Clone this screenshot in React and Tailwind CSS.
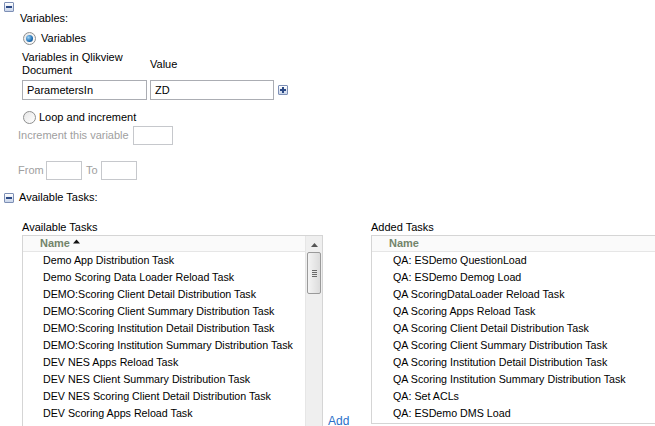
import { useState } from 'react'

const available = [
  'Demo App Distribution Task',
  'Demo Scoring Data Loader Reload Task',
  'DEMO:Scoring Client Detail Distribution Task',
  'DEMO:Scoring Client Summary Distribution Task',
  'DEMO:Scoring Institution Detail Distribution Task',
  'DEMO:Scoring Institution Summary Distribution Task',
  'DEV NES Apps Reload Task',
  'DEV NES Client Summary Distribution Task',
  'DEV NES Scoring Client Detail Distribution Task',
  'DEV Scoring Apps Reload Task',
  'DEV Scoring Client Summary Distribution Task',
]

const added = [
  'QA: ESDemo QuestionLoad',
  'QA: ESDemo Demog Load',
  'QA ScoringDataLoader Reload Task',
  'QA Scoring Apps Reload Task',
  'QA Scoring Client Detail Distribution Task',
  'QA Scoring Client Summary Distribution Task',
  'QA Scoring Institution Detail Distribution Task',
  'QA Scoring Institution Summary Distribution Task',
  'QA: Set ACLs',
  'QA: ESDemo DMS Load',
]

function ToggleBox({ plus = false }) {
  return (
    <div className="relative h-[10px] w-[10px] rounded-[1px] border border-[#7d8fb5] bg-gradient-to-b from-white to-[#c9d5ea]">
      <div className="absolute left-[1px] top-[3px] h-[2px] w-[6px] bg-[#2c4a86]" />
      {plus && <div className="absolute left-[3px] top-[1px] h-[6px] w-[2px] bg-[#2c4a86]" />}
    </div>
  )
}

function Radio({ checked }) {
  return (
    <div className="flex h-[13px] w-[13px] items-center justify-center rounded-full border border-[#8e8f8f] bg-gradient-to-br from-[#e6e6e6] to-white">
      {checked && (
        <div className="h-[7px] w-[7px] rounded-full bg-[radial-gradient(circle_at_35%_35%,#9fd3f5,#1f6fb4_60%,#0d3f78)]" />
      )}
    </div>
  )
}

function TextBox({ value, className }) {
  return (
    <div className={`flex items-center border border-[#abadb3] bg-white px-[4px] text-[#000] ${className}`}>
      {value}
    </div>
  )
}

export default function App() {
  const [mode] = useState('variables')

  return (
    <div className="relative h-[426px] w-[655px] overflow-hidden bg-white font-['Liberation_Sans',Arial,sans-serif] text-[11px] leading-[13px] text-[#000]">
      <div className="pl-[4px] pt-[2px]">
        <ToggleBox />
      </div>

      <div className="pl-[20px]">
        <div className="h-[14px]">Variables:</div>

        <div className="mt-[6px] flex items-center gap-[5px] pl-[3px]">
          <Radio checked={mode === 'variables'} />
          <span>Variables</span>
        </div>

        <div className="mt-[6px] flex pl-[2px]">
          <div className="w-[128px] leading-[13px]">
            Variables in Qlikview
            <br />
            Document
          </div>
          <div className="pt-[7px]">Value</div>
        </div>

        <div className="mt-[3px] flex items-center pl-[2px]">
          <TextBox value="ParametersIn" className="h-[20px] w-[125px]" />
          <TextBox value="ZD" className="ml-[3px] h-[20px] w-[124px]" />
          <div className="ml-[4px]">
            <ToggleBox plus />
          </div>
        </div>

        <div className="mt-[11px] flex items-center gap-[3px] pl-[3px]">
          <Radio checked={false} />
          <span>Loop and increment</span>
        </div>

        <div className="-ml-[2px] mt-[2px] flex items-center text-[#a0a0a0]">
          <span className="w-[115px]">Increment this variable</span>
          <div className="h-[19px] w-[40px] border border-[#c6c8cc] bg-white" />
        </div>

        <div className="-ml-[2px] mt-[16px] flex items-center text-[#a0a0a0]">
          <span className="w-[28px]">From</span>
          <div className="h-[19px] w-[36px] border border-[#c6c8cc] bg-white" />
          <span className="ml-[4px] w-[15px]">To</span>
          <div className="h-[19px] w-[36px] border border-[#c6c8cc] bg-white" />
        </div>
      </div>

      <div className="mt-[11px] flex items-center gap-[5px] pl-[4px]">
        <ToggleBox />
        <span>Available Tasks:</span>
      </div>

      <div className="mt-[17px] flex pl-[22px] text-[10.7px]">
        <div className="flex shrink-0 flex-col">
          <div className="h-[14px] text-[11px]">Available Tasks</div>
          <div className="flex h-[200px] w-[301px] border border-b-0 border-[#d5d5d5]">
            <div className="flex-1">
              <div className="flex h-[16px] items-center gap-[3px] border-b border-[#e6e6e6] bg-[#fafafa] pl-[17px] text-[11px] font-bold text-[#73846b]">
                Name
                <svg width="7" height="5" viewBox="0 0 7 5" className="mb-[5px]">
                  <path d="M0 4.5 L3.5 0.5 L7 4.5 Z" fill="#111" />
                </svg>
              </div>
              {available.map((t) => (
                <div key={t} className="flex h-[17px] items-center whitespace-nowrap pl-[20px]">
                  {t}
                </div>
              ))}
            </div>
            <div className="flex w-[17px] flex-col items-center border-l border-[#e6e6e6] bg-[#efefef]">
              <svg width="7" height="4" viewBox="0 0 7 4" className="mt-[7px]">
                <path d="M0 4 L3.5 0 L7 4 Z" fill="#555" />
              </svg>
              <div className="mt-[5px] flex h-[42px] w-[14px] flex-col items-center justify-center gap-[1px] rounded-[2px] border border-[#9a9a9a] bg-gradient-to-r from-[#f4f4f4] to-[#dcdcdc]">
                <div className="h-px w-[5px] bg-[#6a6a6a]" />
                <div className="h-px w-[5px] bg-[#6a6a6a]" />
                <div className="h-px w-[5px] bg-[#6a6a6a]" />
                <div className="h-px w-[5px] bg-[#6a6a6a]" />
              </div>
            </div>
          </div>
        </div>

        <div className="w-[48px] shrink-0 pl-[5px] pt-[193px]">
          <span className="cursor-pointer text-[12px] leading-[14px] text-[#2a6fc9]">Add</span>
        </div>

        <div className="flex shrink-0 flex-col">
          <div className="h-[14px] text-[11px]">Added Tasks</div>
          <div className="h-[189px] w-[300px] border border-r-0 border-[#d5d5d5]">
            <div className="flex h-[16px] items-center border-b border-[#e6e6e6] bg-[#fafafa] pl-[17px] text-[11px] font-bold text-[#73846b]">
              Name
            </div>
            {added.map((t) => (
              <div key={t} className="flex h-[17px] items-center whitespace-nowrap pl-[21px]">
                {t}
              </div>
            ))}
          </div>
        </div>
      </div>
    </div>
  )
}
